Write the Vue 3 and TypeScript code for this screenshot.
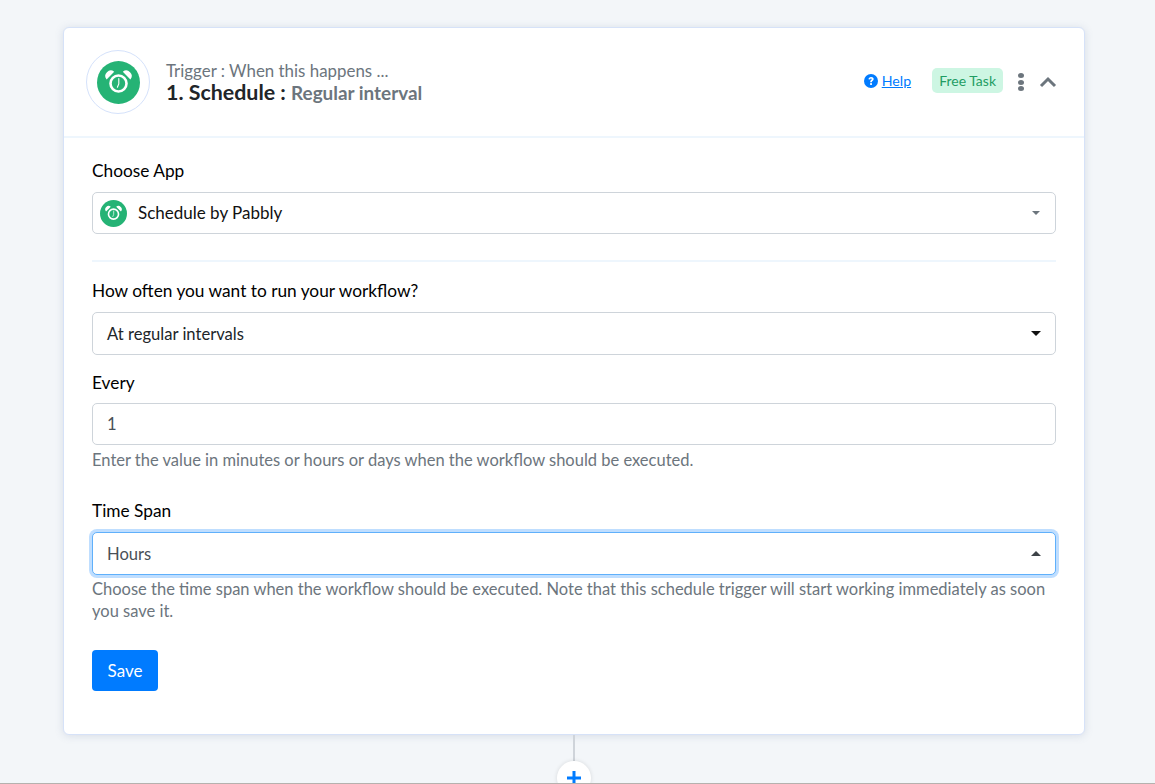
<script setup lang="ts">
const helpEvery = 'Enter the value in minutes or hours or days when the workflow should be executed.'
const helpSpan =
  'Choose the time span when the workflow should be executed. Note that this schedule trigger will start working immediately as soon you save it.'
</script>

<template>
  <div class="page">
    <section class="card">
      <header class="card__head">
        <div class="ring">
          <svg class="clock clock--big" viewBox="0 0 43 43">
            <circle cx="21.5" cy="21.5" r="21.5" fill="#25b375" />
            <path d="M9.6 18.4A5.4 5.4 0 0 1 17.2 10.8zM33.4 18.4A5.4 5.4 0 0 0 25.8 10.8z" fill="#fff" />
            <circle cx="21.5" cy="22.5" r="8" fill="none" stroke="#fff" stroke-width="2.6" />
            <path d="M21.8 17.5v5.4l-1.4 3.4" fill="none" stroke="#fff" stroke-width="1.1" stroke-linecap="round" />
          </svg>
        </div>
        <div class="head-text">
          <p class="head-text__over">Trigger : When this happens ...</p>
          <h1>1. Schedule : <span>Regular interval</span></h1>
        </div>
        <div class="head-actions">
          <a class="help" href="#">
            <svg viewBox="0 0 14 14" width="14" height="14">
              <circle cx="7" cy="7" r="7" fill="#007bff" />
              <path d="M4.4 5.3c.1-1.5 1.2-2.4 2.7-2.4 1.5 0 2.6.9 2.6 2.2 0 1.8-1.8 1.7-1.8 3.1H6.1c0-2.1 1.6-2 1.6-3 0-.4-.3-.7-.7-.7-.5 0-.8.4-.8.9z" fill="#fff" />
              <rect x="6.1" y="9" width="1.9" height="1.9" rx=".4" fill="#fff" />
            </svg>
            <span>Help</span>
          </a>
          <span class="badge">Free Task</span>
          <span class="dots"><i></i><i></i><i></i></span>
          <svg class="chev" viewBox="0 0 18 12" width="18" height="12">
            <path d="M2 10l7-7 7 7" fill="none" stroke="#6c757d" stroke-width="3" />
          </svg>
        </div>
      </header>

      <div class="card__body">
        <label class="lbl lbl--first">Choose App</label>
        <div class="app-select">
          <svg class="clock" viewBox="0 0 43 43">
            <circle cx="21.5" cy="21.5" r="21.5" fill="#25b375" />
            <path d="M9.6 18.4A5.4 5.4 0 0 1 17.2 10.8zM33.4 18.4A5.4 5.4 0 0 0 25.8 10.8z" fill="#fff" />
            <circle cx="21.5" cy="22.5" r="8" fill="none" stroke="#fff" stroke-width="2.6" />
            <path d="M21.8 17.5v5.4l-1.4 3.4" fill="none" stroke="#fff" stroke-width="1.1" stroke-linecap="round" />
          </svg>
          <span>Schedule by Pabbly</span>
          <i class="caret caret--small"></i>
        </div>
        <hr />

        <label class="lbl">How often you want to run your workflow?</label>
        <div class="control control--dark">
          <span>At regular intervals</span>
          <i class="caret"></i>
        </div>

        <label class="lbl lbl--every">Every</label>
        <div class="control control--input"><span>1</span></div>
        <p class="help-text help-text--every">{{ helpEvery }}</p>

        <label class="lbl lbl--span">Time Span</label>
        <div class="control control--focus">
          <span>Hours</span>
          <i class="caret caret--up"></i>
        </div>
        <p class="help-text">{{ helpSpan }}</p>

        <button class="save" type="button">Save</button>
      </div>
    </section>

    <div class="connector"></div>
    <div class="add">
      <svg viewBox="0 0 16 16" width="16" height="16">
        <path d="M8 1v14M1 8h14" stroke="#007bff" stroke-width="3" />
      </svg>
    </div>
  </div>
</template>

<style>
html,
body {
  margin: 0;
  background: #f3f6f9;
}
</style>

<style scoped>
.page {
  height: 783px;
  border-bottom: 1px solid #b5b1ae;
  overflow: hidden;
  background: #f3f6f9;
  font-family: "Lato", sans-serif;
  font-size: 17px;
  line-height: 24px;
  color: #000;
}

.card {
  box-sizing: border-box;
  width: 1022px;
  height: 708px;
  margin: 27px 0 0 63px;
  background: #fff;
  border: 1px solid #d6e2f8;
  border-radius: 6px;
  box-shadow: 0 1px 8px rgba(90, 110, 150, 0.18);
}

.card__head {
  display: flex;
  align-items: center;
  height: 108px;
  padding: 0 27px 0 22px;
  border-bottom: 2px solid #eef6fd;
}

.ring {
  box-sizing: border-box;
  width: 64px;
  height: 64px;
  border: 1px solid #d5e2fb;
  border-radius: 50%;
  display: flex;
  align-items: center;
  justify-content: center;
  flex: none;
}

.clock {
  width: 27px;
  height: 27px;
  flex: none;
}

.clock--big {
  width: 43px;
  height: 43px;
}

.head-text {
  margin-left: 16px;
}

.head-text__over {
  margin: 0;
  color: #6c757d;
  font-size: 16.9px;
  line-height: 21px;
}

.head-text h1 {
  margin: 0;
  font-size: 21.4px;
  line-height: 23px;
  font-weight: 700;
  color: #212529;
}

.head-text h1 span {
  font-size: 18.9px;
  color: #6c757d;
}

.head-actions {
  margin-left: auto;
  display: flex;
  align-items: center;
}

.help {
  display: flex;
  align-items: center;
  gap: 4px;
  margin-bottom: 2px;
  color: #007bff;
  font-size: 14.2px;
  text-decoration: underline;
}

.badge {
  margin: 0 0 3px 21px;
  padding: 0 7px;
  height: 25px;
  line-height: 25px;
  font-size: 14px;
  color: #1f9d63;
  background: #cdf6e3;
  border-radius: 5px;
}

.dots {
  margin-left: 15px;
  display: flex;
  flex-direction: column;
  gap: 1.5px;
}

.dots i {
  width: 6px;
  height: 5px;
  border-radius: 50%;
  background: #6c757d;
}

.chev {
  margin-left: 15px;
}

.card__body {
  padding: 0 28px;
}

.lbl {
  display: block;
  font-size: 17.3px;
  line-height: 24px;
  margin-bottom: 9px;
}

.lbl--first {
  padding-top: 21px;
}

.lbl--every {
  margin-top: 16px;
  margin-bottom: 8px;
}

.lbl--span {
  margin-top: 28px;
}

.app-select,
.control {
  box-sizing: border-box;
  position: relative;
  display: flex;
  align-items: center;
  border: 1px solid #ced4da;
  border-radius: 5px;
  background: #fff;
}

.app-select {
  height: 42px;
  padding-left: 7px;
  gap: 11px;
  color: #111;
}

.control {
  height: 43px;
  padding-left: 14px;
  font-size: 16.6px;
  color: #212529;
}

.control--input {
  height: 42px;
  color: #495057;
}

.control--focus {
  border-color: #5fb0fb;
  box-shadow: 0 0 0 3px #bfdeff;
  color: #495057;
}

.caret {
  position: absolute;
  right: 14px;
  top: 18px;
  width: 0;
  height: 0;
  border-left: 5px solid transparent;
  border-right: 5px solid transparent;
  border-top: 5px solid #111;
}

.caret--small {
  right: 15px;
  border-left-width: 4px;
  border-right-width: 4px;
  border-top: 4px solid #6c757d;
}

.caret--up {
  border-top: 0;
  border-bottom: 5px solid #3d4247;
}

hr {
  border: 0;
  height: 2px;
  margin: 26px 0 17px;
  background: #eef6fd;
}

.help-text {
  margin: 3px 0 0;
  color: #6c757d;
  font-size: 16.5px;
  line-height: 22px;
}

.help-text--every {
  margin-top: 4px;
}

.save {
  display: block;
  margin-top: 28px;
  width: 66px;
  height: 41px;
  border: 0;
  border-radius: 4px;
  background: #007bff;
  color: #fff;
  font: inherit;
}

.connector {
  width: 2px;
  height: 26px;
  margin-left: 573px;
  background: #cfd4da;
}

.add {
  width: 34px;
  height: 34px;
  margin-left: 557px;
  border-radius: 50%;
  background: #fff;
  display: flex;
  align-items: center;
  justify-content: center;
  box-shadow: 0 0 4px rgba(0, 0, 0, 0.12);
}
</style>
